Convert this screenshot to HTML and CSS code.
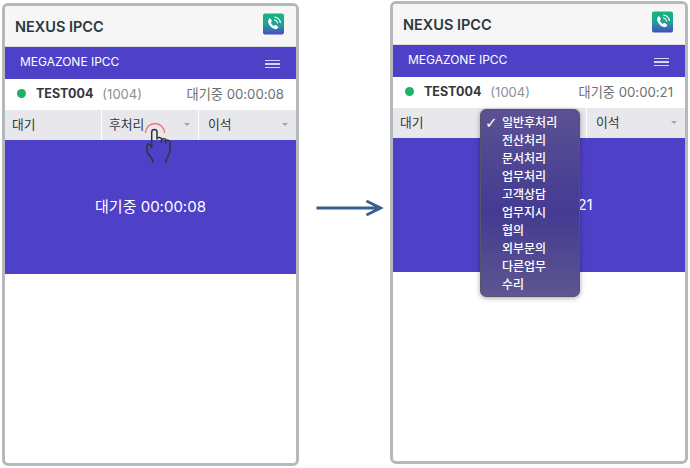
FILE: index.html
```html
<!DOCTYPE html>
<html>
<head>
    <meta name="viewport" content="width=device-width, initial-scale=1.0">
    <title>NEXUS IPCC</title>
    <link rel="stylesheet" href="styles.css">
</head>
<body>
    <svg width="0" height="0" class="defs">
        <defs>
            <linearGradient id="callGrad" x1="0" y1="0" x2="0" y2="1">
                <stop offset="0" stop-color="#14b37d"/>
                <stop offset="0.5" stop-color="#1fa596"/>
                <stop offset="1" stop-color="#4a48c4"/>
            </linearGradient>
        </defs>
    </svg>

    <div class="phone phone-left">
        <div class="title-bar">
            <span class="title">NEXUS IPCC</span>
            <svg class="call-icon" viewBox="0 0 22 22">
                <rect width="22" height="22" rx="2" fill="url(#callGrad)"/>
                <path d="M6.2 5.2c.6-.5 1.3-.4 1.7.2l1.2 1.9c.3.5.2 1-.2 1.4l-.7.7c.5 1.5 1.7 2.9 3.2 3.7l.8-.7c.4-.3.9-.4 1.4-.1l1.9 1.2c.6.4.7 1.100.2 1.700-.9 1-2 1.500-3.200 1.100-3.300-1-6-3.700-7-7-.4-1.300.1-2.800 1.100-3.900z" fill="#fff"/>
                <path d="M11.500 6.800a4 4 0 0 1 3.700 3.700M12 3.800a6.800 6.800 0 0 1 6.200 6.200" fill="none" stroke="#fff" stroke-width="1.200"/>
            </svg>
        </div>
        <div class="menu-bar">
            <span>MEGAZONE IPCC</span>
            <div class="burger"><i></i><i></i><i></i></div>
        </div>
        <div class="status-row">
            <span class="dot"></span>
            <span class="user">TEST004</span>
            <span class="ext">(1004)</span>
            <span class="timer">대기중 00:00:08</span>
        </div>
        <div class="tabs">
            <div class="tab tab-first">대기</div>
            <div class="tab tab-mid">후처리<span class="caret"></span></div>
            <div class="tab tab-last">이석<span class="caret"></span></div>
        </div>
        <div class="panel">대기중 00:00:08</div>

        <svg class="hand" viewBox="0 0 30 50">
            <path class="ripple" d="M0.500 13a9.500 9.500 0 0 1 19 0"/>
            <path class="hand-line" d="M7.600 43v-3L2 32v-6.500c0-1.500 2-2 3-1l1.700 2.500V12c0-3.500 5.300-3.500 5.300 0v7.500M12 18.500c1-1.500 4.500-1.500 4.500.5v4M16.500 19.500c1-1 4-1 4.200.5v3.500M20.700 20.500c1-1 4.300-.5 4.300 1.500v10l-4 8v3"/>
        </svg>
    </div>

    <svg class="arrow" viewBox="0 0 66 18">
        <path d="M0 9h62M50 2l14 7-14 7" fill="none" stroke="#3a5f8f" stroke-width="3"/>
    </svg>

    <div class="phone phone-right">
        <div class="title-bar">
            <span class="title">NEXUS IPCC</span>
            <svg class="call-icon" viewBox="0 0 22 22">
                <rect width="22" height="22" rx="2" fill="url(#callGrad)"/>
                <path d="M6.2 5.2c.6-.5 1.3-.4 1.7.2l1.2 1.9c.3.5.2 1-.2 1.4l-.7.7c.5 1.5 1.7 2.9 3.2 3.7l.8-.7c.4-.3.9-.4 1.4-.1l1.9 1.2c.6.4.7 1.100.2 1.700-.9 1-2 1.500-3.200 1.100-3.300-1-6-3.700-7-7-.4-1.300.1-2.800 1.100-3.900z" fill="#fff"/>
                <path d="M11.500 6.800a4 4 0 0 1 3.700 3.700M12 3.800a6.800 6.800 0 0 1 6.200 6.200" fill="none" stroke="#fff" stroke-width="1.200"/>
            </svg>
        </div>
        <div class="menu-bar">
            <span>MEGAZONE IPCC</span>
            <div class="burger"><i></i><i></i><i></i></div>
        </div>
        <div class="status-row">
            <span class="dot"></span>
            <span class="user">TEST004</span>
            <span class="ext">(1004)</span>
            <span class="timer">대기중 00:00:21</span>
        </div>
        <div class="tabs">
            <div class="tab tab-first">대기</div>
            <div class="tab tab-mid">후처리<span class="caret"></span></div>
            <div class="tab tab-last">이석<span class="caret"></span></div>
        </div>
        <div class="panel">대기중 00:00:21</div>

        <ul class="dropdown">
            <li class="checked">일반후처리</li>
            <li>전산처리</li>
            <li>문서처리</li>
            <li>업무처리</li>
            <li>고객상담</li>
            <li>업무지시</li>
            <li>협의</li>
            <li>외부문의</li>
            <li>다른업무</li>
            <li>수리</li>
        </ul>
    </div>
</body>
</html>
```

FILE: styles.css
```css
body {
    margin: 0;
    width: 690px;
    height: 468px;
    overflow: hidden;
    background-color: white;
    font-family: Inter, "Noto Sans CJK KR", sans-serif;
    display: flex;
    align-items: flex-start;
    color: #33383d;
}
.defs {
    position: absolute;
}
.phone {
    position: relative;
    box-sizing: border-box;
    height: 463px;
    border: 3px solid #b6b9bc;
    border-radius: 6px;
    background-color: white;
    overflow: hidden;
}
.phone-left {
    width: 297px;
    margin: 3px 0 0 2px;
}
.phone-right {
    width: 298px;
    margin: 1px 0 0 0;
}
.arrow {
    width: 69px;
    height: 18px;
    margin: 199px 6px 0 16px;
    flex: none;
}
.title-bar {
    height: 40px;
    background-color: #f6f6f6;
    border-bottom: 1px solid #dcdcdc;
    display: flex;
    align-items: center;
    justify-content: space-between;
    padding: 0 12px 0 10px;
}
.title {
    font-size: 14.500px;
    font-weight: 600;
    color: #2b3640;
}
.call-icon {
    width: 21px;
    height: 22px;
    margin-top: -4px;
}
.menu-bar {
    box-sizing: border-box;
    height: 32px;
    background-color: #4f40c8;
    color: white;
    font-size: 12px;
    display: flex;
    align-items: center;
    justify-content: space-between;
    padding: 0 16px 3px 15px;
}
.burger {
    display: flex;
    flex-direction: column;
    gap: 2px;
    margin-top: 5px;
}
.burger i {
    display: block;
    width: 15px;
    height: 1.500px;
    background-color: #d6d3f3;
}
.status-row {
    box-sizing: border-box;
    height: 31px;
    display: flex;
    align-items: center;
    padding: 0 12px 2px 12px;
    font-size: 13px;
}
.dot {
    width: 9px;
    height: 9px;
    border-radius: 50%;
    background-color: #1fb168;
    margin-right: 10px;
}
.user {
    font-weight: 700;
    font-size: 12.500px;
    color: #33383d;
    margin-right: 9px;
}
.ext {
    color: #8c8f93;
}
.timer {
    margin-left: auto;
    font-size: 13.200px;
    color: #6c6f73;
}
.tabs {
    height: 30px;
    display: flex;
    background-color: #e8e7ec;
    font-size: 12.800px;
}
.tab {
    position: relative;
    box-sizing: border-box;
    padding-left: 7px;
    line-height: 29px;
    border-right: 1px solid white;
}
.tab-first {
    width: 97px;
}
.tab-mid {
    width: 97px;
}
.tab-last {
    flex: 1;
    padding-left: 9px;
    border-right: none;
}
.caret {
    position: absolute;
    right: 8px;
    top: 13px;
    border-left: 3.500px solid transparent;
    border-right: 3.500px solid transparent;
    border-top: 3.500px solid #a5a5a8;
}
.panel {
    box-sizing: border-box;
    height: 134px;
    padding-bottom: 4px;
    background-color: #4f40c8;
    color: white;
    font-size: 15px;
    display: flex;
    align-items: center;
    justify-content: center;
}
.hand {
    position: absolute;
    left: 140px;
    top: 114px;
    width: 30px;
    height: 50px;
    overflow: visible;
}
.ripple {
    fill: none;
    stroke: #f0786f;
    stroke-width: 1.500px;
}
.hand-line {
    fill: none;
    stroke: #2f3439;
    stroke-width: 1.500px;
}
.dropdown {
    position: absolute;
    left: 87px;
    top: 105px;
    width: 100px;
    height: 188px;
    box-sizing: border-box;
    margin: 0;
    padding: 4px 0 0 21px;
    list-style: none;
    border: 1px solid #55556a;
    border-radius: 6px;
    background-image: linear-gradient(#5b5192, #443a92 55%, #5d5690);
    box-shadow: 0 1px 5px rgba(0, 0, 0, 0.35);
    color: white;
    font-size: 12px;
    font-weight: 500;
}
.dropdown li {
    position: relative;
    height: 18px;
    line-height: 18px;
}
.checked::before {
    content: "✓";
    position: absolute;
    left: -17px;
    font-family: "DejaVu Sans", sans-serif;
    font-size: 15px;
}
```
